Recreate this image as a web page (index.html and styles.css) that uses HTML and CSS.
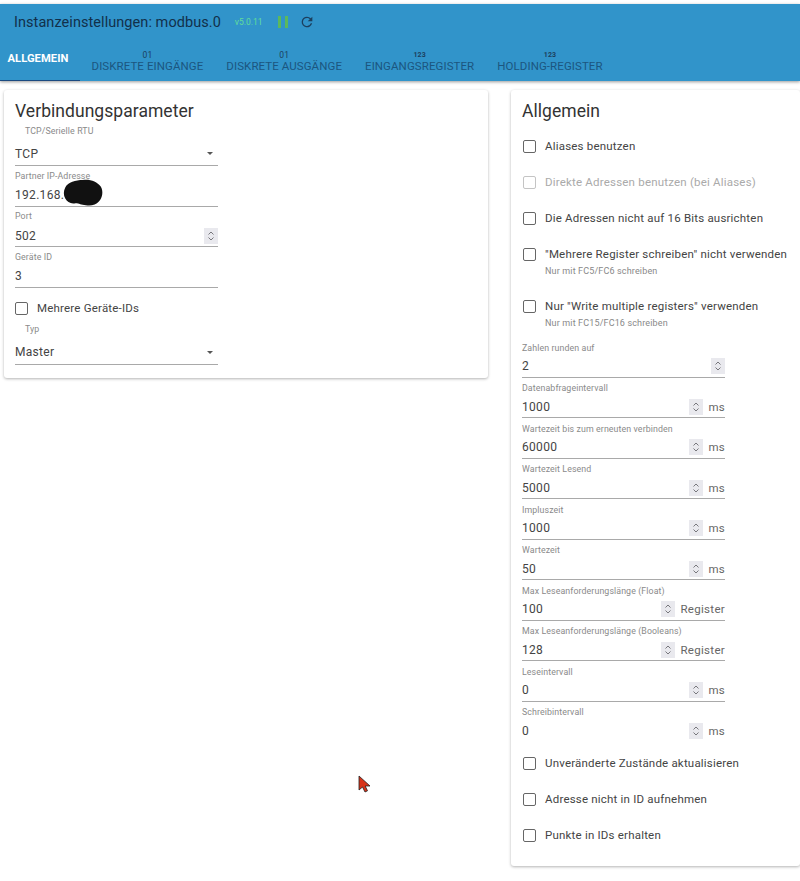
FILE: index.html
```html
<!DOCTYPE html>
<html lang="de">
<head>
<meta charset="utf-8">
<title>Instanzeinstellungen: modbus.0</title>
<link rel="stylesheet" href="styles.css">
</head>
<body>
<svg class="defs" width="0" height="0" aria-hidden="true">
  <symbol id="spin" viewBox="0 0 14 16">
    <rect width="14" height="16" fill="#e9e9ee"/>
    <path d="M4.5 6.5 7 4l2.5 2.5M4.5 9.5 7 12l2.5-2.5" fill="none" stroke="#77777c" stroke-width="1"/>
  </symbol>
</svg>
<header class="appbar">
  <div class="titlerow">
    <h1 class="title">Instanzeinstellungen: modbus.0</h1>
    <span class="version">v5.0.11</span>
    <svg class="pause" width="10" height="12" viewBox="0 0 10 12"><path d="M0 0h3v12H0zM7 0h3v12H7z" fill="#5cb85c"/></svg>
    <svg class="reload" width="16" height="16" viewBox="0 0 24 24"><path d="M17.65 6.35A7.96 7.96 0 0 0 12 4a8 8 0 1 0 7.73 10h-2.08A6 6 0 1 1 12 6c1.66 0 3.14.69 4.22 1.78L13 11h7V4l-2.35 2.35z" fill="#1c3f5e"/></svg>
  </div>
  <nav class="tabs">
    <div class="tab tab-active">ALLGEMEIN</div>
    <div class="tab"><span class="tabicon">01</span>DISKRETE EINGÄNGE</div>
    <div class="tab"><span class="tabicon">01</span>DISKRETE AUSGÄNGE</div>
    <div class="tab"><span class="tabicon tabicon-bold">123</span>EINGANGSREGISTER</div>
    <div class="tab"><span class="tabicon tabicon-bold">123</span>HOLDING-REGISTER</div>
  </nav>
</header>
<main class="content">
  <section class="card card-left">
    <h2 class="cardtitle">Verbindungsparameter</h2>
    <div class="field field-select">
      <label class="label label-indent">TCP/Serielle RTU</label>
      <div class="control"><span class="value">TCP</span><span class="caret"></span></div>
    </div>
    <div class="field">
      <label class="label">Partner IP-Adresse</label>
      <div class="control"><span class="value">192.168.1</span></div>
      <svg class="scribble" width="42" height="28" viewBox="0 0 44 30"><path d="M3 9C6 3 14 1 22 1c8-1 15 2 19 7 3 5 2 12-2 16-3 4-9 5-14 4-5 0-7-2-11-2-5 1-9-1-11-5C1 17 1 13 3 9z" fill="#111"/></svg>
    </div>
    <div class="field">
      <label class="label">Port</label>
      <div class="control"><span class="value">502</span><svg class="spin"><use href="#spin"/></svg></div>
    </div>
    <div class="field">
      <label class="label">Geräte ID</label>
      <div class="control"><span class="value">3</span></div>
    </div>
    <label class="check check-left"><span class="box"></span><span class="checktext">Mehrere Geräte-IDs</span></label>
    <div class="field field-select field-typ">
      <label class="label label-indent">Typ</label>
      <div class="control"><span class="value">Master</span><span class="caret"></span></div>
    </div>
  </section>
  <section class="card card-right">
    <h2 class="cardtitle">Allgemein</h2>
    <div class="checks-top">
      <label class="check"><span class="box"></span><span class="checktext">Aliases benutzen</span></label>
      <label class="check check-disabled"><span class="box"></span><span class="checktext">Direkte Adressen benutzen (bei Aliases)</span></label>
      <label class="check"><span class="box"></span><span class="checktext">Die Adressen nicht auf 16 Bits ausrichten</span></label>
      <div class="check check-help"><span class="box"></span><span class="checktext">"Mehrere Register schreiben" nicht verwenden</span><span class="help">Nur mit FC5/FC6 schreiben</span></div>
      <div class="check check-help"><span class="box"></span><span class="checktext">Nur "Write multiple registers" verwenden</span><span class="help">Nur mit FC15/FC16 schreiben</span></div>
    </div>
    <div class="fields">
      <div class="field"><label class="label">Zahlen runden auf</label><div class="control"><span class="value">2</span><svg class="spin"><use href="#spin"/></svg></div></div>
      <div class="field"><label class="label">Datenabfrageintervall</label><div class="control"><span class="value">1000</span><svg class="spin"><use href="#spin"/></svg><span class="unit">ms</span></div></div>
      <div class="field"><label class="label">Wartezeit bis zum erneuten verbinden</label><div class="control"><span class="value">60000</span><svg class="spin"><use href="#spin"/></svg><span class="unit">ms</span></div></div>
      <div class="field"><label class="label">Wartezeit Lesend</label><div class="control"><span class="value">5000</span><svg class="spin"><use href="#spin"/></svg><span class="unit">ms</span></div></div>
      <div class="field"><label class="label">Impluszeit</label><div class="control"><span class="value">1000</span><svg class="spin"><use href="#spin"/></svg><span class="unit">ms</span></div></div>
      <div class="field"><label class="label">Wartezeit</label><div class="control"><span class="value">50</span><svg class="spin"><use href="#spin"/></svg><span class="unit">ms</span></div></div>
      <div class="field"><label class="label">Max Leseanforderungslänge (Float)</label><div class="control"><span class="value">100</span><svg class="spin"><use href="#spin"/></svg><span class="unit">Register</span></div></div>
      <div class="field"><label class="label">Max Leseanforderungslänge (Booleans)</label><div class="control"><span class="value">128</span><svg class="spin"><use href="#spin"/></svg><span class="unit">Register</span></div></div>
      <div class="field"><label class="label">Leseintervall</label><div class="control"><span class="value">0</span><svg class="spin"><use href="#spin"/></svg><span class="unit">ms</span></div></div>
      <div class="field field-noline"><label class="label">Schreibintervall</label><div class="control"><span class="value">0</span><svg class="spin"><use href="#spin"/></svg><span class="unit">ms</span></div></div>
    </div>
    <div class="bottomchecks">
      <label class="check"><span class="box"></span><span class="checktext">Unveränderte Zustände aktualisieren</span></label>
      <label class="check"><span class="box"></span><span class="checktext">Adresse nicht in ID aufnehmen</span></label>
      <label class="check"><span class="box"></span><span class="checktext">Punkte in IDs erhalten</span></label>
    </div>
  </section>
</main>
<svg class="cursor" width="13" height="18" viewBox="0 0 13 18"><path d="M1 1v14l3.5-3 2.5 5 2.5-1.2L7.2 11H12z" fill="#d8341a" stroke="#222" stroke-width=".8"/></svg>
</body>
</html>
```
FILE: styles.css
```css
* { box-sizing: border-box; }
html, body { margin: 0; height: 100%; }
body {
  position: relative;
  height: 881px;
  overflow: hidden;
  padding-top: 4px;
  background: #fff;
  font-family: Roboto, "Liberation Sans", sans-serif;
  color: #333;
}
.defs { position: absolute; }
.appbar {
  height: 77px;
  background: #3194ca;
  box-shadow: 0 1px 3px rgba(0,0,0,.4);
}
.titlerow { display: flex; align-items: center; height: 36px; padding-left: 14px; }
.title { margin: 0; font-size: 14.5px; font-weight: 400; letter-spacing: .06px; color: #12304a; }
.version { margin-left: 14px; font-size: 8.5px; color: #62dd9a; }
.pause { margin-left: 15px; }
.reload { margin-left: 11px; }
.tabs { display: flex; height: 41px; }
.tab {
  display: flex; flex-direction: column; align-items: center; justify-content: flex-end;
  padding: 0 11.5px 8px;
  font-size: 11.5px; letter-spacing: .08px; line-height: 13px; color: #1c5680;
}
.tab-active {
  justify-content: center; width: 80px; padding: 0 4px 3px 0;
  font-size: 11.2px; font-weight: 700; color: #fff;
  border-bottom: 1.5px solid #1b4a80;
}
.tabicon { font-size: 8.5px; line-height: 10px; color: #1c3f5e; }
.tabicon-bold { font-weight: 700; font-size: 7px; }
.content { display: flex; align-items: flex-start; gap: 23px; padding: 9px 0 0 4px; }
.card { background: #fff; border-radius: 3px; box-shadow: 0 1px 3px rgba(0,0,0,.3); }
.card-left { width: 484px; height: 288px; padding: 11px 11px 0; flex: none; }
.card-right { width: 289px; height: 776px; padding: 11px 11px 0; flex: none; }
.cardtitle { margin: 0; font-size: 17.5px; font-weight: 400; line-height: 21px; color: #333; letter-spacing: .05px; }
.field {
  position: relative; width: 203px; height: 40.5px;
  display: flex; flex-direction: column; justify-content: flex-end;
  border-bottom: 1px solid #a9a9a9;
}
.label { font-size: 8.8px; line-height: 11px; color: #8a8a8a; letter-spacing: .1px; margin-bottom: 3px; white-space: nowrap; }
.fields .label { margin-bottom: 2px; }
.label-indent { padding-left: 10px; }
.control { display: flex; align-items: center; height: 21px; }
.value { flex: 1; font-size: 12px; letter-spacing: .3px; color: #444; }
.spin { width: 14px; height: 16px; flex: none; }
.unit { font-size: 11.5px; letter-spacing: .3px; color: #666; margin-left: 5px; }
.caret { width: 0; height: 0; margin-right: 5px; border-left: 3.5px solid transparent; border-right: 3.5px solid transparent; border-top: 3px solid #555; }
.field-select { height: 44px; }
.field-select .label { margin-bottom: 7px; }
.field-select .control { padding-bottom: 2px; }
.field-typ { height: 41px; }
.field-typ .label { margin-bottom: 8px; }
.scribble { position: absolute; left: 47px; top: 13px; }
.check { position: relative; display: block; height: 36px; padding: 11px 0 0 23px; font-size: 11.5px; line-height: 14px; color: #444; }
.box { position: absolute; left: 1px; top: 12px; width: 13px; height: 13px; border: 1.5px solid #666; border-radius: 2px; }
.checktext { letter-spacing: .2px; white-space: nowrap; }
.check-disabled { color: #aaa; }
.check-disabled .box { border-color: #c4c4c4; }
.check-help { height: 52px; }
.help { display: block; margin-top: 5px; font-size: 9px; line-height: 11px; letter-spacing: .15px; color: #888; }
.check-left { padding: 9px 0 0 22px; margin-top: 4px; height: 32px; }
.check-left .box { left: 0; top: 10px; }
.checks-top { margin-top: 6px; }
.fields { margin-top: -3px; }
.field-noline { border-bottom-color: transparent; }
.bottomchecks { margin-top: 3px; }
.cursor { position: absolute; left: 358px; top: 775px; }
```
